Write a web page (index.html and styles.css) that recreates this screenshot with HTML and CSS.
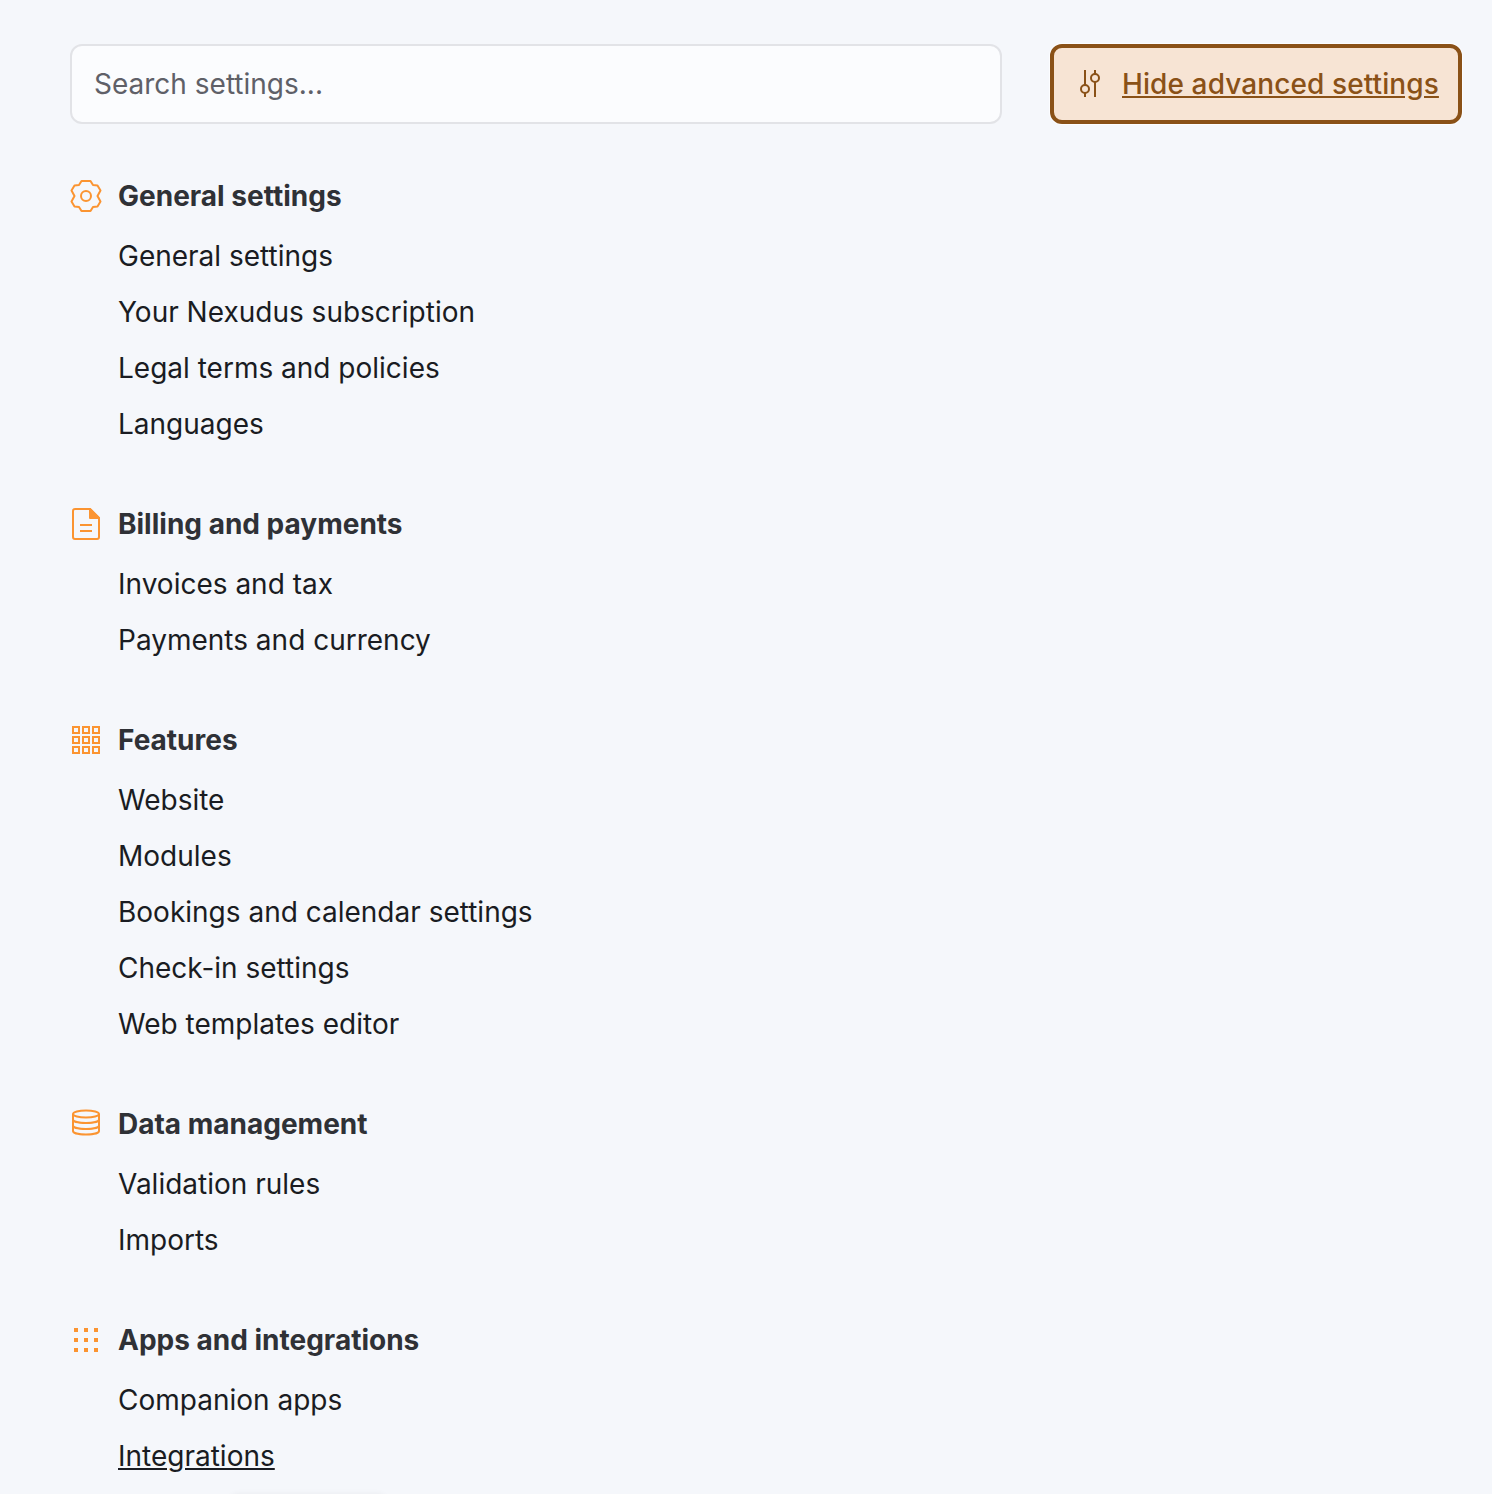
FILE: index.html
```html
<!DOCTYPE html>
<html lang="en">
<head>
    <meta charset="UTF-8">
    <title>Settings</title>
    <link rel="stylesheet" href="styles.css">
</head>
<body>
    <div class="page">
        <div class="toolbar">
            <input type="text" class="search" placeholder="Search settings...">
            <button class="advanced">
                <svg class="advanced-icon" viewBox="0 0 24 32" fill="none" stroke="#8a5117" stroke-width="2">
                    <path d="M7 2v15M7 25v4M17 2v4M17 14v15"/>
                    <circle cx="7" cy="21" r="4"/>
                    <circle cx="17" cy="10" r="4"/>
                </svg>
                <span class="advanced-label">Hide advanced settings</span>
            </button>
        </div>

        <div class="section">
            <div class="section-title">
                <svg class="icon" viewBox="0 0 32 32" fill="none" stroke="#fb9431" stroke-width="2" stroke-linejoin="round">
                    <path d="M11.500 1h9l2.500 4 4.500 .5 3 5-3 5.500 3 5.500-3 5-4.500 .5-2.500 4h-9l-2.500-4-4.500-.5-3-5 3-5.500-3-5.500 3-5 4.500-.5z"/>
                    <circle cx="16" cy="16" r="5"/>
                </svg>
                General settings
            </div>
            <a class="item">General settings</a>
            <a class="item">Your Nexudus subscription</a>
            <a class="item">Legal terms and policies</a>
            <a class="item">Languages</a>
        </div>

        <div class="section">
            <div class="section-title">
                <svg class="icon" viewBox="0 0 32 32" fill="none" stroke="#fb9431" stroke-width="2" stroke-linejoin="round">
                    <path d="M3 3a2 2 0 0 1 2-2h15l9 9v19a2 2 0 0 1-2 2h-22a2 2 0 0 1-2-2z"/>
                    <path d="M20 1l9 9h-9z" fill="#fb9431"/>
                    <path d="M10 17h12M10 23h12"/>
                </svg>
                Billing and payments
            </div>
            <a class="item">Invoices and tax</a>
            <a class="item">Payments and currency</a>
        </div>

        <div class="section">
            <div class="section-title">
                <svg class="icon" viewBox="0 0 32 32" fill="none" stroke="#fb9431" stroke-width="2">
                    <path d="M3 3h6v6h-6zM13 3h6v6h-6zM23 3h6v6h-6zM3 13h6v6h-6zM13 13h6v6h-6zM23 13h6v6h-6zM3 23h6v6h-6zM13 23h6v6h-6zM23 23h6v6h-6z"/>
                </svg>
                Features
            </div>
            <a class="item">Website</a>
            <a class="item">Modules</a>
            <a class="item">Bookings and calendar settings</a>
            <a class="item">Check-in settings</a>
            <a class="item">Web templates editor</a>
        </div>

        <div class="section">
            <div class="section-title">
                <svg class="icon" viewBox="0 0 32 32" fill="none" stroke="#fb9431" stroke-width="2">
                    <ellipse cx="16" cy="6" rx="13" ry="3.500"/>
                    <path d="M3 6v17c0 2 5.800 3.500 13 3.500s13-1.500 13-3.500v-17M3 11.500c0 2 5.800 3.500 13 3.500s13-1.500 13-3.500M3 17.500c0 2 5.800 3.500 13 3.500s13-1.500 13-3.500"/>
                </svg>
                Data management
            </div>
            <a class="item">Validation rules</a>
            <a class="item">Imports</a>
        </div>

        <div class="section">
            <div class="section-title">
                <svg class="icon" viewBox="0 0 32 32" fill="#fb9431">
                    <path d="M4 4h4v4h-4zM14 4h4v4h-4zM24 4h4v4h-4zM4 14h4v4h-4zM14 14h4v4h-4zM24 14h4v4h-4zM4 24h4v4h-4zM14 24h4v4h-4zM24 24h4v4h-4z"/>
                </svg>
                Apps and integrations
            </div>
            <a class="item">Companion apps</a>
            <a class="item item-active">Integrations</a>
        </div>
    </div>
    <div class="toast"></div>
</body>
</html>
```

FILE: styles.css
```css
html, body {
    margin: 0;
    padding: 0;
    height: 100%;
    overflow: hidden;
}

body {
    font-family: Inter, "Liberation Sans", sans-serif;
    background-color: #f5f7fb;
    color: #1a1c22;
    font-size: 28px;
}

.page {
    padding: 44px 30px 0 70px;
}

.toolbar {
    display: flex;
    gap: 48px;
    margin-bottom: 52px;
}

.search {
    flex: 1;
    min-width: 0;
    height: 80px;
    box-sizing: border-box;
    padding: 0 22px;
    font-family: inherit;
    font-size: 28px;
    color: #5f6068;
    background-color: #fbfcfe;
    border: 2px solid #e2e3e7;
    border-radius: 12px;
    outline: none;
}

.search::placeholder {
    color: #5f6068;
    opacity: 1;
}

.advanced {
    display: flex;
    align-items: center;
    gap: 20px;
    width: 412px;
    height: 80px;
    box-sizing: border-box;
    padding: 0 20px 0 24px;
    font-family: inherit;
    font-size: 28px;
    font-weight: 500;
    letter-spacing: 0.1px;
    color: #8a5117;
    background-color: #f7e4d4;
    border: 4px solid #8a5117;
    border-radius: 12px;
    box-shadow: 0 0 0 1px #fcfdff;
}

.advanced-icon {
    width: 24px;
    height: 32px;
    flex-shrink: 0;
}

.advanced-label {
    text-decoration: underline;
    white-space: nowrap;
}

.section {
    margin-bottom: 52px;
}

.section-title {
    display: flex;
    align-items: center;
    gap: 16px;
    height: 40px;
    font-weight: 700;
    color: #2f3136;
    margin-bottom: 12px;
}

.icon {
    width: 32px;
    height: 32px;
    flex-shrink: 0;
}

.item {
    display: block;
    height: 56px;
    line-height: 56px;
    margin-left: 48px;
    white-space: nowrap;
}

.item-active {
    text-decoration: underline;
}

.toast {
    position: absolute;
    left: 230px;
    bottom: -20px;
    width: 156px;
    height: 20px;
    border-radius: 8px;
    box-shadow: 0 0 6px rgba(0, 0, 0, 0.05);
}
```
